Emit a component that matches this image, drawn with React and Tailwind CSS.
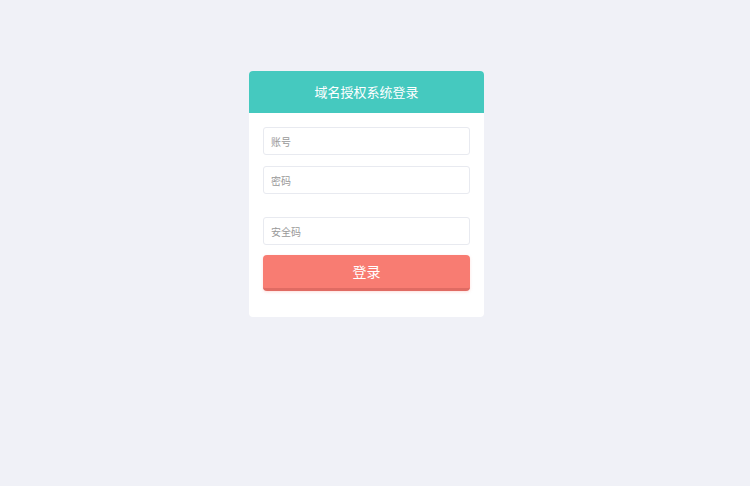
export default function App() {
  return (
    <div className="min-h-[486px] w-full bg-[#f0f1f7] pt-[71px]" style={{ fontFamily: '"Noto Sans CJK SC", "Noto Sans", sans-serif' }}>
      <div className="ml-[249px] w-[235px] overflow-hidden rounded-[4px] bg-white">
        <div className="flex h-[42px] items-center justify-center bg-[#45c9bf] text-[13px] text-white">
          域名授权系统登录
        </div>
        <div className="flex flex-col px-[14px] pb-[26px] pt-[14px]">
          <input
            className="h-[28px] w-full rounded-[3px] border border-[#e8eaf0] px-[7px] text-[10px] text-[#555] outline-none placeholder:text-[#999]"
            placeholder="账号"
          />
          <input
            className="mt-[11px] h-[28px] w-full rounded-[3px] border border-[#e8eaf0] px-[7px] text-[10px] text-[#555] outline-none placeholder:text-[#999]"
            placeholder="密码"
          />
          <input
            className="mt-[23px] h-[28px] w-full rounded-[3px] border border-[#e8eaf0] px-[7px] text-[10px] text-[#555] outline-none placeholder:text-[#999]"
            placeholder="安全码"
          />
          <button className="mt-[10px] flex h-[36px] w-full items-center justify-center rounded-[4px] border-b-[3px] border-[#e06b63] bg-[#f87c72] text-[14px] text-white shadow-[0_1px_3px_rgba(248,124,114,0.25)]">
            登录
          </button>
        </div>
      </div>
    </div>
  );
}
